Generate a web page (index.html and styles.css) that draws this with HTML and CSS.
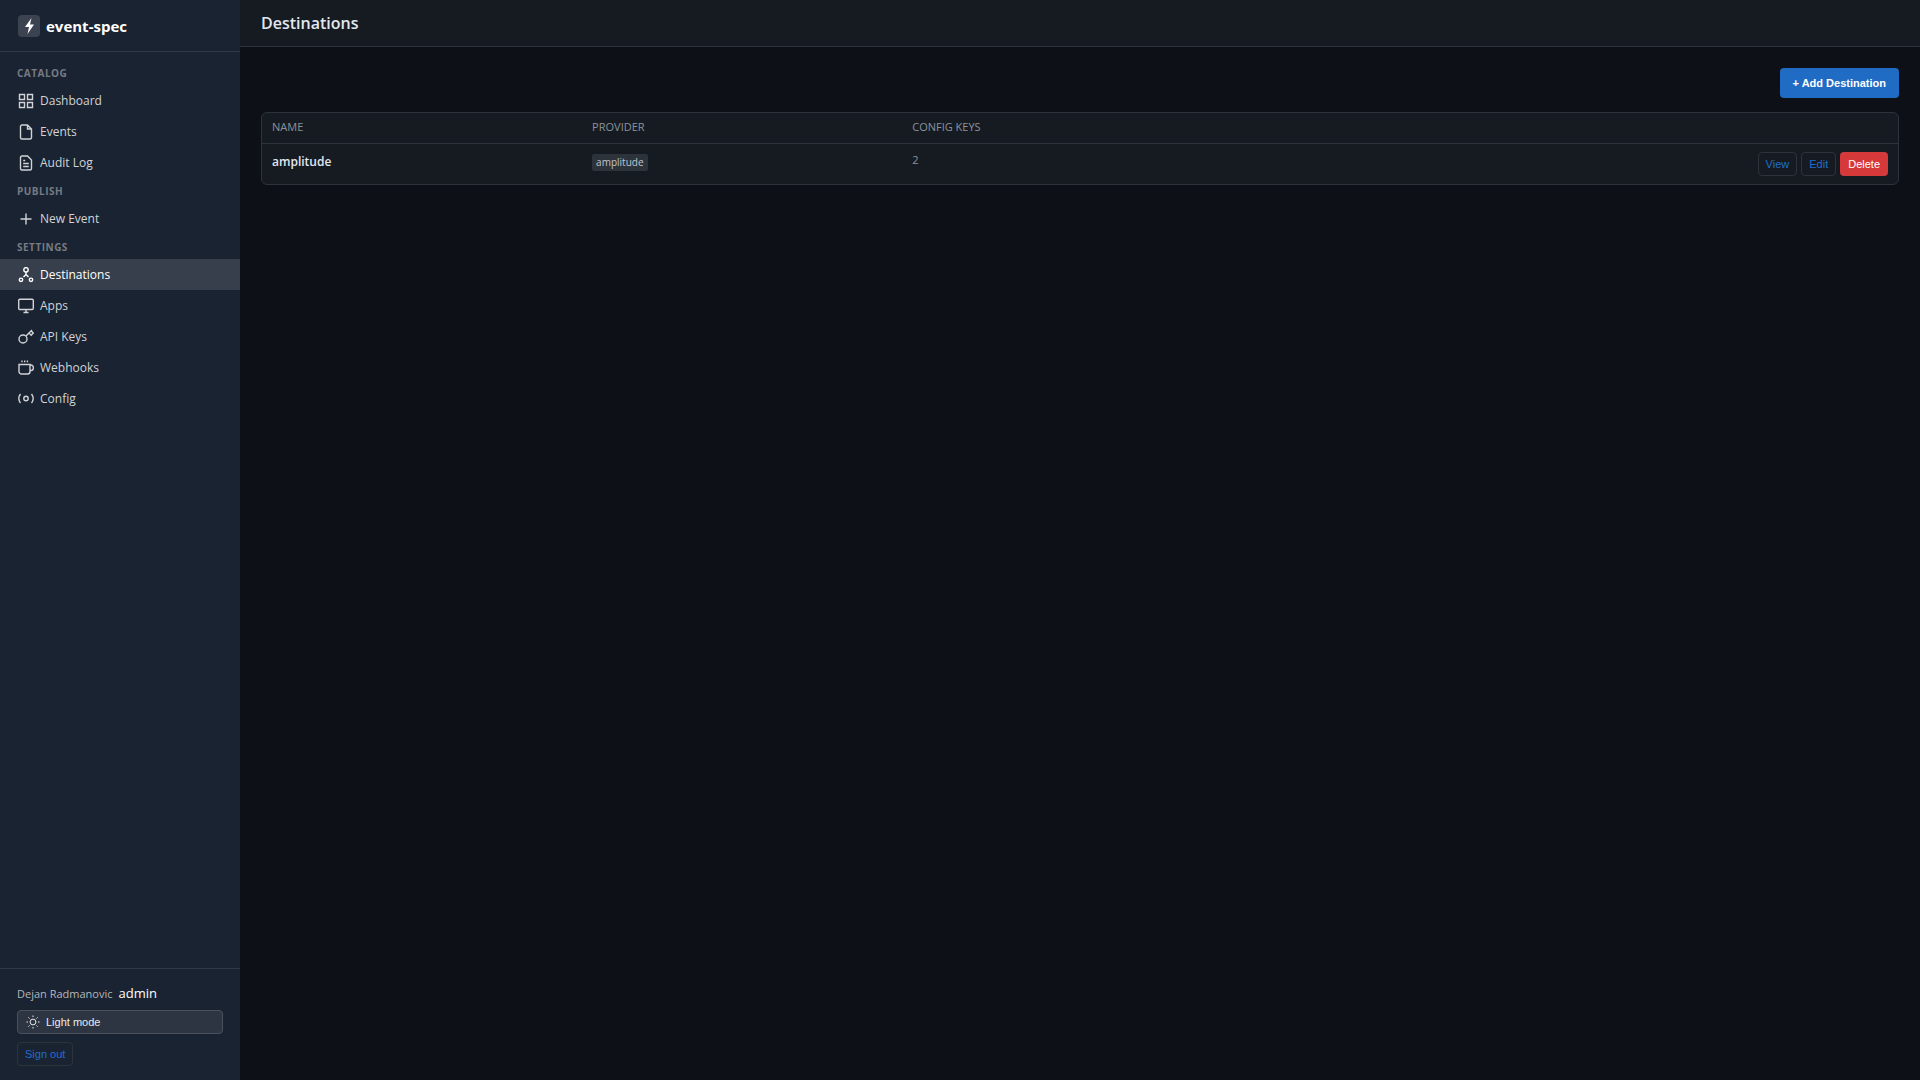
FILE: index.html
```
<!DOCTYPE html>
<html lang="en">
<head>
    <meta charset="UTF-8">
    <title>Destinations - event-spec</title>
    <link rel="stylesheet" href="styles.css">
</head>
<body>
    <aside class="sidebar">
        <div class="brand">
            <span class="brand-icon">
                <svg width="14" height="18" viewBox="0 0 14 18"><path d="M9.500 1 3 10h4L5.500 17l6.500-9.500H8z" fill="#fff"/></svg>
            </span>
            <span class="brand-name">event-spec</span>
        </div>
        <nav class="nav">
            <div class="nav-label">Catalog</div>
            <a href="#" class="nav-item">
                <svg class="icon" viewBox="0 0 16 16"><path d="M1.500 1.500h5v5h-5zM9.500 1.500h5v5h-5zM1.500 9.500h5v5h-5zM9.500 9.500h5v5h-5z"/></svg>
                Dashboard
            </a>
            <a href="#" class="nav-item">
                <svg class="icon" viewBox="0 0 16 16"><path d="M9.500 1H4a1.500 1.500 0 0 0-1.500 1.500v11A1.500 1.500 0 0 0 4 15h8a1.500 1.500 0 0 0 1.500-1.500V5zM9.500 1v4h4"/></svg>
                Events
            </a>
            <a href="#" class="nav-item">
                <svg class="icon" viewBox="0 0 16 16"><path d="M9.500 1H4a1.500 1.500 0 0 0-1.500 1.500v11A1.500 1.500 0 0 0 4 15h8a1.500 1.500 0 0 0 1.500-1.500V5zM5.200 5.500h2M5.200 8.500h5.600M5.200 11.500h5.600"/></svg>
                Audit Log
            </a>
            <div class="nav-label">Publish</div>
            <a href="#" class="nav-item">
                <svg class="icon" viewBox="0 0 16 16"><path d="M8 2.500v11M2.500 8h11"/></svg>
                New Event
            </a>
            <div class="nav-label">Settings</div>
            <a href="#" class="nav-item active">
                <svg class="icon" viewBox="0 0 16 16"><circle cx="8" cy="2.800" r="2.200"/><circle cx="3" cy="12.800" r="1.700"/><circle cx="13" cy="12.800" r="1.700"/><path d="M8 5v3M8 7.500l-2.500 2.500M8 7.500l2.500 2.500"/></svg>
                Destinations
            </a>
            <a href="#" class="nav-item">
                <svg class="icon" viewBox="0 0 16 16"><rect x="0.700" y="1.200" width="14.600" height="10.300" rx="1.200"/><path d="M8 11.500v3M5.500 14.500h5"/></svg>
                Apps
            </a>
            <a href="#" class="nav-item">
                <svg class="icon" viewBox="0 0 16 16"><circle cx="5" cy="10" r="4"/><path d="M8 7l6-6M11 4l2.200 2.200 2-2.200L13 1.800"/></svg>
                API Keys
            </a>
            <a href="#" class="nav-item">
                <svg class="icon" viewBox="0 0 16 16"><path d="M1 4.500h11v7A2.500 2.500 0 0 1 9.500 14h-6A2.500 2.500 0 0 1 1 11.500zM12 5h1a2.300 2.300 0 0 1 2.300 2.300v.900A2.300 2.300 0 0 1 13 10.500h-1M4 .500v1.800M6.700.500v1.800M9.400.500v1.800"/></svg>
                Webhooks
            </a>
            <a href="#" class="nav-item">
                <svg class="icon" viewBox="0 0 16 16"><circle cx="8" cy="7.500" r="2.200"/><path d="M2.500 3a7.500 7.500 0 0 0 0 9M13.500 3a7.500 7.500 0 0 1 0 9"/></svg>
                Config
            </a>
        </nav>
        <div class="sidebar-footer">
            <div class="user">
                <span class="user-name">Dejan Radmanovic</span>
                <span class="user-role">admin</span>
            </div>
            <button type="button" class="theme-toggle">
                <svg class="sun" viewBox="0 0 14 14"><circle cx="7" cy="7" r="2.900"/><path d="M7 .500v1.500M7 12v1.500M.500 7H2M12 7h1.500M2.400 2.400l1.100 1.100M10.500 10.500l1.100 1.100M11.600 2.400l-1.100 1.100M3.500 10.500l-1.100 1.100"/></svg>
                Light mode
            </button>
            <button type="button" class="btn btn-outline">Sign out</button>
        </div>
    </aside>

    <div class="main">
        <header class="topbar">
            <h1>Destinations</h1>
        </header>
        <main class="content">
            <div class="toolbar">
                <button type="button" class="btn btn-primary">+ Add Destination</button>
            </div>
            <div class="card">
                <table>
                    <thead>
                        <tr>
                            <th>Name</th>
                            <th>Provider</th>
                            <th>Config Keys</th>
                            <th class="col-actions"></th>
                        </tr>
                    </thead>
                    <tbody>
                        <tr>
                            <td class="name">amplitude</td>
                            <td><span class="badge">amplitude</span></td>
                            <td class="muted">2</td>
                            <td>
                                <div class="actions">
                                    <button type="button" class="btn btn-outline">View</button>
                                    <button type="button" class="btn btn-outline">Edit</button>
                                    <button type="button" class="btn btn-danger">Delete</button>
                                </div>
                            </td>
                        </tr>
                    </tbody>
                </table>
            </div>
        </main>
    </div>
</body>
</html>
```
FILE: styles.css
```
* {
    box-sizing: border-box;
}

body {
    display: flex;
    min-height: 100vh;
    margin: 0;
    background-color: #0d1117;
    color: #e2e8f0;
    font-family: "Segoe UI", "Open Sans", "Noto Sans", sans-serif;
    font-size: 13px;
    line-height: 19px;
}

button {
    font-family: Arial, "Liberation Sans", sans-serif;
    cursor: pointer;
}

/* Sidebar */
.sidebar {
    display: flex;
    flex-direction: column;
    flex-shrink: 0;
    width: 240px;
    background-color: #1a2332;
}

.brand {
    display: flex;
    align-items: center;
    gap: 6px;
    padding: 15px 18px 14px;
    border-bottom: 1px solid #2f3947;
}

.brand-icon {
    display: flex;
    align-items: center;
    justify-content: center;
    width: 22px;
    height: 22px;
    border-radius: 4px;
    background-color: #3c4350;
}

.brand-name {
    color: #fff;
    font-size: 15px;
    font-weight: 700;
}

.nav {
    flex: 1;
    padding: 8px 0;
}

.nav-label {
    padding: 6px 17px 5px;
    color: #767b84;
    font-size: 10px;
    font-weight: 700;
    line-height: 14px;
    letter-spacing: 0.05em;
    text-transform: uppercase;
}

.nav-item {
    display: flex;
    align-items: center;
    gap: 6px;
    padding: 6px 18px;
    color: #d1d3d6;
    font-size: 12px;
    text-decoration: none;
}

.nav-item.active {
    background-color: #373f4c;
    color: #fff;
}

.icon {
    width: 16px;
    height: 16px;
    fill: none;
    stroke: currentColor;
    stroke-width: 1.4;
}

.sidebar-footer {
    padding: 15px 17px 14px;
    border-top: 1px solid #2f3947;
}

.user {
    display: flex;
    align-items: baseline;
    gap: 6px;
    margin-bottom: 7px;
}

.user-name {
    color: #b4b7bc;
    font-size: 11px;
}

.user-role {
    color: #fff;
    font-size: 13px;
}

.theme-toggle {
    display: flex;
    align-items: center;
    gap: 6px;
    width: 100%;
    height: 24px;
    margin-bottom: 8px;
    padding: 0 8px;
    border: 1px solid #4a515d;
    border-radius: 4px;
    background-color: #2e3542;
    color: #e8eaec;
    font-size: 11px;
}

.sun {
    width: 14px;
    height: 14px;
    fill: none;
    stroke: currentColor;
}

/* Buttons */
.btn {
    height: 24px;
    padding: 0 7px;
    border: 1px solid transparent;
    border-radius: 4px;
    font-size: 11px;
}

.btn-outline {
    border-color: #2d333b;
    background: none;
    color: #206dd0;
}

.btn-primary {
    height: 30px;
    padding: 0 12px;
    background-color: #206bc4;
    color: #fff;
    font-weight: 700;
}

.btn-danger {
    background-color: #d63939;
    color: #fff;
}

/* Main area */
.main {
    flex: 1;
    min-width: 0;
}

.topbar {
    padding: 12px 21px;
    border-bottom: 1px solid #2d333b;
    background-color: #161b22;
}

.topbar h1 {
    margin: 0;
    font-size: 16px;
    font-weight: 600;
    line-height: 22px;
}

.content {
    padding: 21px;
}

.toolbar {
    display: flex;
    justify-content: flex-end;
    margin-bottom: 14px;
}

.card {
    overflow: hidden;
    border: 1px solid #2d333b;
    border-radius: 6px;
    background-color: #161b22;
}

table {
    width: 100%;
    border-collapse: collapse;
    table-layout: fixed;
}

th {
    padding: 4px 10px 7px;
    border-bottom: 1px solid #2d333b;
    color: #8b929b;
    font-size: 11px;
    font-weight: 500;
    text-align: left;
    text-transform: uppercase;
}

td {
    padding: 8px 10px;
    vertical-align: top;
}

.col-actions {
    width: 41.3%;
}

.name {
    font-size: 12px;
    font-weight: 600;
}

.muted {
    color: #8b929b;
    font-size: 11px;
    line-height: 16px;
}

.badge {
    display: inline-block;
    padding: 0 4px;
    border-radius: 2px;
    background-color: #2d333b;
    color: #c0c5cc;
    font-size: 10px;
    line-height: 17px;
}

.actions {
    display: flex;
    justify-content: flex-end;
    gap: 4px;
}
```
